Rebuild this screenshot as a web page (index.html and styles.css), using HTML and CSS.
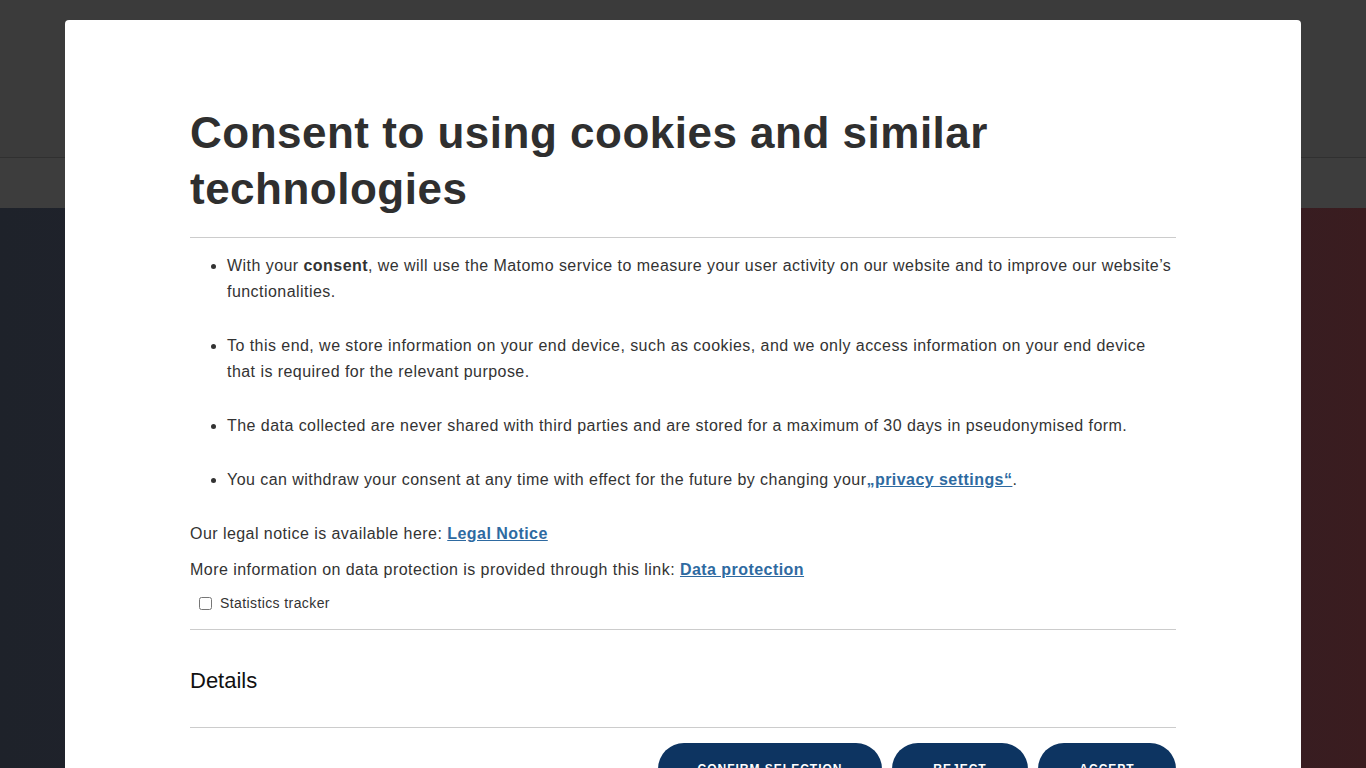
FILE: index.html
```html
<!DOCTYPE html>
<html lang="en">
<head>
<meta charset="utf-8">
<title>Consent</title>
<link rel="stylesheet" href="styles.css">
</head>
<body>
<div class="page">
  <header class="topbar"></header>
  <nav class="navband"></nav>
  <section class="hero"></section>
</div>
<div class="modal" role="dialog">
  <h1 class="title">Consent to using cookies and similar technologies</h1>
  <hr class="rule">
  <ul class="points">
    <li>With your <strong>consent</strong>, we will use the Matomo service to measure your user activity on our website and to improve our website’s functionalities.</li>
    <li>To this end, we store information on your end device, such as cookies, and we only access information on your end device that is required for the relevant purpose.</li>
    <li>The data collected are never shared with third parties and are stored for a maximum of 30 days in pseudonymised form.</li>
    <li>You can withdraw your consent at any time with effect for the future by changing your<a href="#" class="link">„privacy settings“</a>.</li>
  </ul>
  <p class="note">Our legal notice is available here: <a href="#" class="link">Legal Notice</a></p>
  <p class="note note2">More information on data protection is provided through this link: <a href="#" class="link">Data protection</a></p>
  <label class="check"><input type="checkbox"> Statistics tracker</label>
  <hr class="rule rule2">
  <h2 class="details">Details</h2>
  <hr class="rule rule3">
  <div class="actions">
    <button class="btn btn-confirm">Confirm selection</button>
    <button class="btn btn-reject">Reject</button>
    <button class="btn btn-accept">Accept</button>
  </div>
</div>
</body>
</html>
```
FILE: styles.css
```css
html, body {
  margin: 0;
  padding: 0;
  height: 100%;
  overflow: hidden;
}
body {
  font-family: "Liberation Sans", Arial, sans-serif;
  background: #262228;
}
.page {
  display: flex;
  flex-direction: column;
  height: 100vh;
}
.topbar {
  height: 157px;
  background: #3b3b3b;
  border-bottom: 1px solid #303030;
}
.navband {
  height: 50px;
  background: #3d3d3d;
}
.hero {
  flex: 1;
  background: linear-gradient(90deg, #1e222a 0%, #262331 55%, #3a1c1f 100%);
}
.modal {
  position: fixed;
  left: 65px;
  top: 20px;
  width: 1236px;
  bottom: -200px;
  box-sizing: border-box;
  background: #fff;
  border-radius: 4px;
  padding: 85px 125px 0 125px;
  color: #333;
}
.title {
  margin: 0;
  font-size: 44px;
  line-height: 56px;
  font-weight: bold;
  letter-spacing: 0.5px;
  color: #2f2f2f;
}
.rule {
  border: 0;
  border-top: 1px solid #cccccc;
  margin: 20px 0 0 0;
}
.points {
  margin: 15px 0 0 0;
  padding-left: 37px;
  font-size: 16px;
  line-height: 26px;
  letter-spacing: 0.45px;
}
.points li {
  margin-bottom: 28px;
}
.points li:last-child {
  margin-bottom: 0;
}
.link {
  color: #2e6aa1;
  font-weight: bold;
  text-decoration: underline;
}
.note {
  margin: 28px 0 0 0;
  font-size: 16px;
  line-height: 26px;
  letter-spacing: 0.45px;
}
.note2 {
  margin-top: 10px;
}
.check {
  display: flex;
  align-items: center;
  gap: 8px;
  margin: 10px 0 0 9px;
  font-size: 14px;
  line-height: 20px;
  letter-spacing: 0.4px;
}
.check input {
  margin: 0;
  width: 13px;
  height: 13px;
}
.rule2 {
  margin-top: 16px;
}
.details {
  margin: 36px 0 0 0;
  font-size: 22px;
  line-height: 30px;
  font-weight: normal;
  color: #111;
}
.rule3 {
  margin-top: 31px;
}
.actions {
  display: flex;
  justify-content: flex-end;
  gap: 10px;
  margin-top: 15px;
}
.btn {
  background: #0d3461;
  color: #fff;
  border: 0;
  border-radius: 26px;
  height: 52px;
  font-family: "Liberation Sans", Arial, sans-serif;
  font-weight: bold;
  font-size: 12px;
  letter-spacing: 1px;
  text-transform: uppercase;
  padding: 0 20px;
}
.btn-confirm { width: 224px; }
.btn-reject { width: 136px; }
.btn-accept { width: 138px; }
```
